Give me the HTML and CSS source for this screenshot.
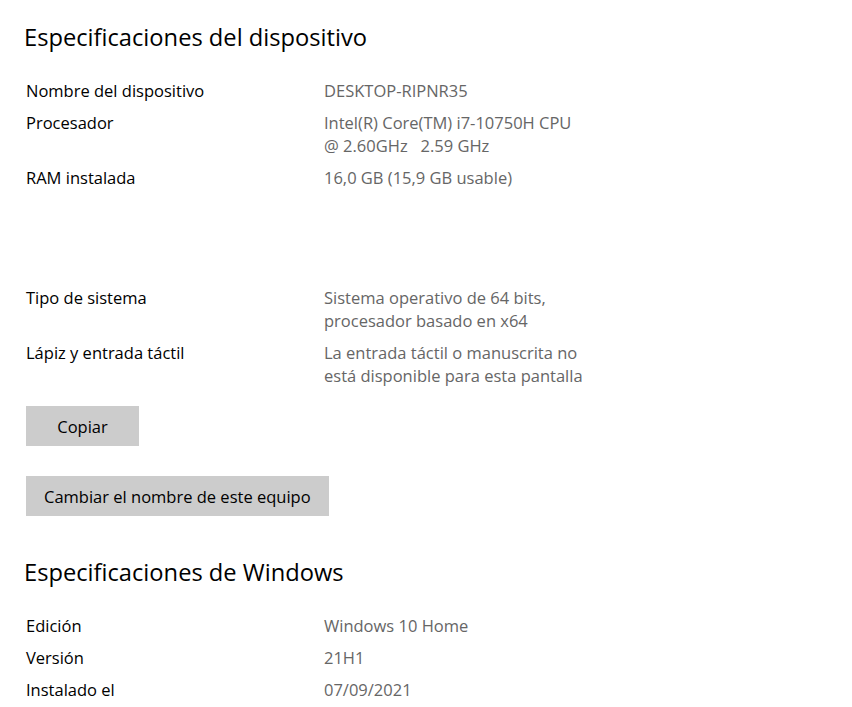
FILE: index.html
```html
<!DOCTYPE html>
<html lang="es">
<head>
    <meta charset="UTF-8">
    <meta name="viewport" content="width=device-width, initial-scale=1.0">
    <title>Acerca de</title>
    <link rel="stylesheet" href="styles.css">
</head>
<body>
    <div class="page">
        <section class="specs">
            <h2>Especificaciones del dispositivo</h2>

            <dl class="spec-list">
                <dt>Nombre del dispositivo</dt>
                <dd>DESKTOP-RIPNR35</dd>

                <dt>Procesador</dt>
                <dd>Intel(R) Core(TM) i7-10750H CPU<br>@ 2.60GHz&nbsp;&nbsp; 2.59 GHz</dd>

                <dt>RAM instalada</dt>
                <dd>16,0 GB (15,9 GB usable)</dd>

                <dt class="blank"></dt>
                <dd class="blank"></dd>

                <dt>Tipo de sistema</dt>
                <dd>Sistema operativo de 64 bits,<br>procesador basado en x64</dd>

                <dt>Lápiz y entrada táctil</dt>
                <dd>La entrada táctil o manuscrita no<br>está disponible para esta pantalla</dd>
            </dl>

            <div class="actions">
                <button class="btn btn-small">Copiar</button>
                <button class="btn">Cambiar el nombre de este equipo</button>
            </div>
        </section>

        <section class="specs">
            <h2>Especificaciones de Windows</h2>

            <dl class="spec-list">
                <dt>Edición</dt>
                <dd>Windows 10 Home</dd>

                <dt>Versión</dt>
                <dd>21H1</dd>

                <dt>Instalado el</dt>
                <dd>07/09/2021</dd>
            </dl>
        </section>
    </div>
</body>
</html>
```

FILE: styles.css
```css
body {
    margin: 0;
    background: #ffffff;
    color: #000000;
    font-family: "Open Sans", "Noto Sans", sans-serif;
    font-size: 16.5px;
}

.page {
    padding: 19px 24px 0 24px;
}

h2 {
    margin: 0;
    font-size: 23.7px;
    font-weight: 400;
    line-height: 36px;
}

.spec-list {
    display: grid;
    grid-template-columns: 298px 1fr;
    row-gap: 9px;
    margin: 24px 0 0 2px;
    line-height: 23px;
}

.spec-list dt,
.spec-list dd {
    margin: 0;
}

.spec-list dd {
    color: #666666;
}

.spec-list .blank {
    height: 79px;
}

.actions {
    display: flex;
    flex-direction: column;
    align-items: flex-start;
    gap: 30px;
    margin: 19px 0 0 2px;
}

.btn {
    height: 40px;
    padding: 0 18px;
    border: none;
    background: #cccccc;
    color: #000000;
    font-family: inherit;
    font-size: inherit;
}

.btn-small {
    min-width: 113px;
}

.specs + .specs {
    margin-top: 38px;
}
```
